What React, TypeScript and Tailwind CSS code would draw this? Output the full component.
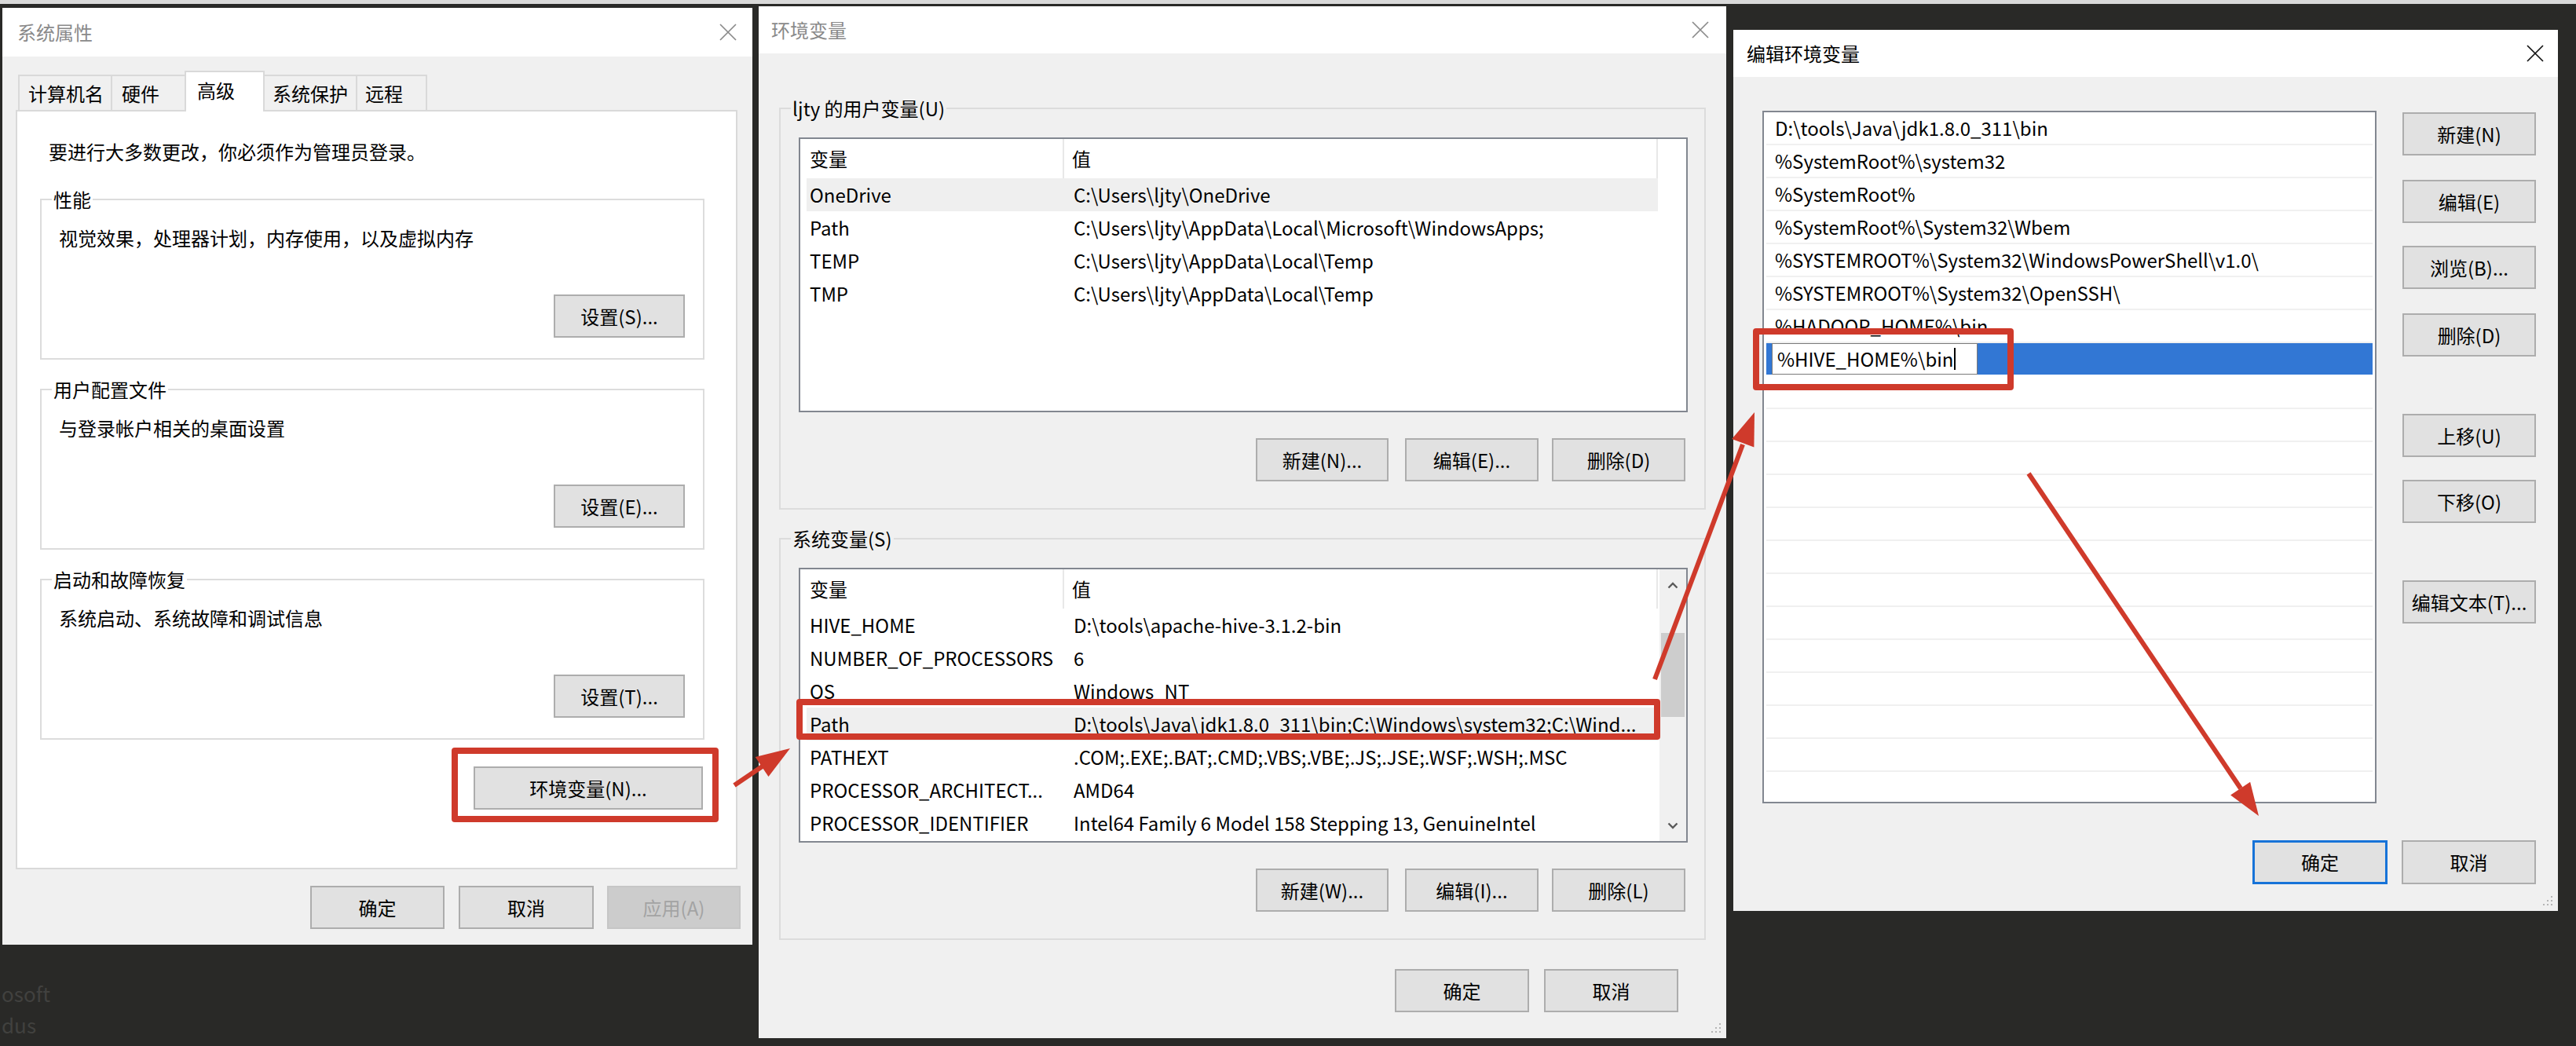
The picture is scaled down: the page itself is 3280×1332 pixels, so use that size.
import React from "react";

type BtnProps = {
  children: React.ReactNode;
  className?: string;
  disabled?: boolean;
  primary?: boolean;
};

function Btn({ children, className = "", disabled = false, primary = false }: BtnProps) {
  const tone = disabled
    ? "border-2 border-[#c6c6c6] bg-[#cccccc] text-[#a3a3a3]"
    : primary
    ? "border-[3px] border-[#1773d8] bg-[#e1e1e1] text-black"
    : "border-2 border-[#adadad] bg-[#e1e1e1] text-black";
  return (
    <div className={`flex h-[55px] shrink-0 items-center justify-center whitespace-nowrap text-[24px] leading-[34px] ${tone} ${className}`}>
      {children}
    </div>
  );
}

function CloseX({ color }: { color: string }) {
  return (
    <svg width="24" height="22" viewBox="0 0 24 22">
      <path d="M2 1 L22 21 M22 1 L2 21" stroke={color} strokeWidth="1.7" fill="none" />
    </svg>
  );
}

function TitleBar({ title, h, pl, pr, active }: { title: string; h: string; pl: string; pr: string; active?: boolean }) {
  return (
    <div className={`flex shrink-0 items-center justify-between bg-white ${h} ${pl} ${pr}`}>
      <span className={`text-[24px] leading-[34px] ${active ? "text-black" : "text-[#8a8a8a]"}`}>{title}</span>
      <CloseX color={active ? "#111111" : "#8a8a8a"} />
    </div>
  );
}

function Grip() {
  return (
    <svg className="absolute bottom-[5px] right-[5px]" width="16" height="16" viewBox="0 0 16 16">
      <g fill="#b5b5b5">
        <rect x="12" y="2" width="2" height="2" />
        <rect x="12" y="7" width="2" height="2" />
        <rect x="12" y="12" width="2" height="2" />
        <rect x="7" y="7" width="2" height="2" />
        <rect x="7" y="12" width="2" height="2" />
        <rect x="2" y="12" width="2" height="2" />
      </g>
    </svg>
  );
}

function GroupBox({ label, text, btn }: { label: string; text: string; btn: string }) {
  return (
    <div className="relative ml-[29px] flex h-[205px] w-[846px] shrink-0 flex-col border-2 border-[#dcdcdc]">
      <span className="absolute -top-[18px] left-[13px] bg-white px-[2px] text-[24px] leading-[34px]">{label}</span>
      <div className="ml-[22px] mt-[31px] text-[24px] leading-[34px]">{text}</div>
      <Btn className="mr-[23px] mt-[55px] w-[167px] self-end">{btn}</Btn>
    </div>
  );
}

function SystemProps() {
  const tabs = [
    { t: "计算机名", w: "w-[118px]", pl: "pl-[11px]" },
    { t: "硬件", w: "w-[94px]", pl: "pl-[12px]" },
    { t: "高级", w: "w-[102px]", pl: "pl-[14px]", sel: true },
    { t: "系统保护", w: "w-[116px]", pl: "pl-[10px]" },
    { t: "远程", w: "w-[91px]", pl: "pl-[10px]" },
  ];
  return (
    <div className="ml-[3px] mt-[5px] flex h-[1193px] w-[955px] shrink-0 flex-col bg-[#f0f0f0]">
      <TitleBar title="系统属性" h="h-[62px]" pl="pl-[19px]" pr="pr-[19px]" />
      <div className="ml-[17px] mt-[19px] flex h-[49px] items-end pl-[3px]">
        {tabs.map((tab, i) =>
          tab.sel ? (
            <div
              key={tab.t}
              className={`relative z-10 -mb-[2px] flex h-[52px] items-start border-2 border-b-0 border-[#d9d9d9] bg-white pt-[6px] text-[24px] leading-[34px] ${tab.w} ${tab.pl}`}
            >
              {tab.t}
            </div>
          ) : (
            <div
              key={tab.t}
              className={`flex h-[45px] items-center border-t-2 border-[#d9d9d9] bg-[#f0f0f0] text-[24px] leading-[34px] ${i === 4 ? "border-r-2" : ""} ${i === 3 ? "" : "border-l-2"} ${tab.w} ${tab.pl}`}
            >
              {tab.t}
            </div>
          )
        )}
      </div>
      <div className="ml-[17px] flex h-[967px] w-[919px] shrink-0 flex-col border-2 border-[#d9d9d9] bg-white">
        <div className="ml-[40px] mt-[34px] text-[24px] leading-[34px]">要进行大多数更改，你必须作为管理员登录。</div>
        <div className="mt-[43px]">
          <GroupBox label="性能" text="视觉效果，处理器计划，内存使用，以及虚拟内存" btn="设置(S)..." />
        </div>
        <div className="mt-[37px]">
          <GroupBox label="用户配置文件" text="与登录帐户相关的桌面设置" btn="设置(E)..." />
        </div>
        <div className="mt-[37px]">
          <GroupBox label="启动和故障恢复" text="系统启动、系统故障和调试信息" btn="设置(T)..." />
        </div>
        <div className="relative mr-[42px] mt-[34px] self-end">
          <Btn className="w-[292px]">环境变量(N)...</Btn>
          <div className="pointer-events-none absolute -bottom-[16px] -left-[28px] -right-[20px] -top-[24px] rounded-[4px] border-[8px] border-[#cf3a2b]" />
        </div>
      </div>
      <div className="mt-[21px] flex justify-end pr-[15px]">
        <Btn className="w-[171px]">确定</Btn>
        <Btn className="ml-[18px] w-[172px]">取消</Btn>
        <Btn className="ml-[17px] w-[170px]" disabled>
          应用(A)
        </Btn>
      </div>
    </div>
  );
}

type Row = { k: string; v: string; hl?: boolean; boxed?: boolean };

function VarRow({ r }: { r: Row }) {
  return (
    <div className={`relative flex h-[42px] w-[1084px] shrink-0 items-center text-[24px] ${r.hl ? "bg-[#efefef]" : ""}`}>
      <div className="w-[336px] shrink-0 whitespace-nowrap pl-[4px] leading-[34px]">{r.k}</div>
      <div className="flex-1 whitespace-nowrap pl-[4px] leading-[34px]">{r.v}</div>
      {r.boxed && (
        <div className="pointer-events-none absolute -left-[13px] -right-[3px] -top-[11px] bottom-[1px] rounded-[4px] border-[8px] border-[#cf3a2b]" />
      )}
    </div>
  );
}

function VarHeader() {
  return (
    <div className="ml-[8px] flex h-[50px] w-[1084px] shrink-0 items-center text-[24px] leading-[34px]">
      <div className="flex h-full w-[328px] shrink-0 items-center border-r-2 border-[#e8e8e8] pl-[4px]">变量</div>
      <div className="flex h-full flex-1 items-center border-r-2 border-[#e8e8e8] pl-[10px]">值</div>
    </div>
  );
}

function Chevron({ up }: { up?: boolean }) {
  return (
    <svg width="14" height="9" viewBox="0 0 14 9">
      <path d={up ? "M1.5 7.5 L7 2 L12.5 7.5" : "M1.5 1.5 L7 7 L12.5 1.5"} stroke="#5a5a5a" strokeWidth="2.4" fill="none" />
    </svg>
  );
}

function VarGroup({ label, rows, btns, scroll, mt }: { label: string; rows: Row[]; btns: string[]; scroll?: boolean; mt: string }) {
  return (
    <div className={`relative ml-[26px] flex h-[512px] w-[1180px] shrink-0 flex-col border-2 border-[#dcdcdc] ${mt}`}>
      <span className="absolute -top-[18px] left-[13px] bg-[#f0f0f0] px-[2px] text-[24px] leading-[34px]">{label}</span>
      <div className="ml-[23px] mt-[36px] flex h-[350px] w-[1132px] shrink-0 border-2 border-[#828790] bg-white">
        <div className="flex flex-1 flex-col">
          <VarHeader />
          <div className="ml-[8px] flex flex-col">
            {rows.map((r) => (
              <VarRow key={r.k} r={r} />
            ))}
          </div>
        </div>
        {scroll && (
          <div className="flex w-[34px] shrink-0 flex-col bg-[#f0f0f0]">
            <div className="flex h-[40px] items-center justify-center">
              <Chevron up />
            </div>
            <div className="mx-[2px] mt-[41px] h-[107px] bg-[#cdcdcd]" />
            <div className="flex-1" />
            <div className="flex h-[40px] items-center justify-center">
              <Chevron />
            </div>
          </div>
        )}
      </div>
      <div className="mr-[24px] mt-[33px] flex justify-end">
        <Btn className="w-[169px]">{btns[0]}</Btn>
        <Btn className="ml-[21px] w-[170px]">{btns[1]}</Btn>
        <Btn className="ml-[17px] w-[170px]">{btns[2]}</Btn>
      </div>
    </div>
  );
}

function EnvVars() {
  const userRows: Row[] = [
    { k: "OneDrive", v: "C:\\Users\\ljty\\OneDrive", hl: true },
    { k: "Path", v: "C:\\Users\\ljty\\AppData\\Local\\Microsoft\\WindowsApps;" },
    { k: "TEMP", v: "C:\\Users\\ljty\\AppData\\Local\\Temp" },
    { k: "TMP", v: "C:\\Users\\ljty\\AppData\\Local\\Temp" },
  ];
  const sysRows: Row[] = [
    { k: "HIVE_HOME", v: "D:\\tools\\apache-hive-3.1.2-bin" },
    { k: "NUMBER_OF_PROCESSORS", v: "6" },
    { k: "OS", v: "Windows_NT" },
    { k: "Path", v: "D:\\tools\\Java\\jdk1.8.0_311\\bin;C:\\Windows\\system32;C:\\Wind...", hl: true, boxed: true },
    { k: "PATHEXT", v: ".COM;.EXE;.BAT;.CMD;.VBS;.VBE;.JS;.JSE;.WSF;.WSH;.MSC" },
    { k: "PROCESSOR_ARCHITECT...", v: "AMD64" },
    { k: "PROCESSOR_IDENTIFIER", v: "Intel64 Family 6 Model 158 Stepping 13, GenuineIntel" },
  ];
  return (
    <div className="relative ml-[8px] mt-[3px] flex h-[1314px] w-[1232px] shrink-0 flex-col bg-[#f0f0f0]">
      <TitleBar title="环境变量" h="h-[60px]" pl="pl-[16px]" pr="pr-[21px]" />
      <VarGroup mt="mt-[69px]" label="ljty 的用户变量(U)" rows={userRows} btns={["新建(N)...", "编辑(E)...", "删除(D)"]} />
      <VarGroup mt="mt-[36px]" label="系统变量(S)" rows={sysRows} btns={["新建(W)...", "编辑(I)...", "删除(L)"]} scroll />
      <div className="mt-[37px] flex justify-end pr-[61px]">
        <Btn className="w-[171px]">确定</Btn>
        <Btn className="ml-[19px] w-[171px]">取消</Btn>
      </div>
      <Grip />
    </div>
  );
}

function EditEnv() {
  const items = [
    "D:\\tools\\Java\\jdk1.8.0_311\\bin",
    "%SystemRoot%\\system32",
    "%SystemRoot%",
    "%SystemRoot%\\System32\\Wbem",
    "%SYSTEMROOT%\\System32\\WindowsPowerShell\\v1.0\\",
    "%SYSTEMROOT%\\System32\\OpenSSH\\",
    "%HADOOP_HOME%\\bin",
  ];
  const empties = Array.from({ length: 13 }, (_, i) => i);
  return (
    <div className="relative ml-[9px] mt-[33px] flex h-[1122px] w-[1050px] shrink-0 flex-col bg-[#f0f0f0]">
      <TitleBar title="编辑环境变量" h="h-[60px]" pl="pl-[17px]" pr="pr-[17px]" active />
      <div className="mt-[43px] flex items-start">
        <div className="ml-[37px] flex h-[882px] w-[782px] shrink-0 flex-col border-2 border-[#828790] bg-white px-[3px]">
          {items.map((t) => (
            <div key={t} className="flex h-[42px] shrink-0 items-center whitespace-nowrap border-b-2 border-[#f0f0f0] pl-[11px] text-[24px] leading-[34px]">
              {t}
            </div>
          ))}
          <div className="flex h-[42px] shrink-0 items-center border-b-2 border-white bg-[#3277d4]">
            <div className="relative ml-[7px] flex h-[40px] w-[262px] items-center border border-[#7a7a7a] bg-white pl-[6px] text-[24px] leading-[34px]">
              <span>%HIVE_HOME%\bin</span>
              <span className="ml-[1px] h-[28px] w-[2px] bg-black" />
              <div className="pointer-events-none absolute -bottom-[21px] -left-[25px] -right-[47px] -top-[20px] rounded-[4px] border-[8px] border-[#cf3a2b]" />
            </div>
          </div>
          {empties.map((i) => (
            <div key={i} className="h-[42px] shrink-0 border-b-2 border-[#f0f0f0]" />
          ))}
        </div>
        <div className="ml-[33px] mt-[2px] flex w-[170px] shrink-0 flex-col">
          <Btn className="w-[170px]">新建(N)</Btn>
          <Btn className="mt-[31px] w-[170px]">编辑(E)</Btn>
          <Btn className="mt-[29px] w-[170px]">浏览(B)...</Btn>
          <Btn className="mt-[31px] w-[170px]">删除(D)</Btn>
          <Btn className="mt-[73px] w-[170px]">上移(U)</Btn>
          <Btn className="mt-[29px] w-[170px]">下移(O)</Btn>
          <Btn className="mt-[73px] w-[170px]">编辑文本(T)...</Btn>
        </div>
      </div>
      <div className="mt-[47px] flex justify-end pr-[28px]">
        <Btn className="h-[56px] w-[172px]" primary>
          确定
        </Btn>
        <Btn className="ml-[18px] h-[56px] w-[171px]">取消</Btn>
      </div>
      <Grip />
    </div>
  );
}

function Arrows() {
  const c = "#cf3a2b";
  return (
    <svg className="pointer-events-none absolute left-0 top-0" width="3280" height="1332" viewBox="0 0 3280 1332">
      <line x1="935" y1="1000" x2="972" y2="975" stroke={c} strokeWidth="6" />
      <polygon points="1006,953 978.5,988.9 961.7,964" fill={c} />
      <line x1="2107" y1="865" x2="2219" y2="566" stroke={c} strokeWidth="6" />
      <polygon points="2234,525 2233.4,569.6 2205.2,559.1" fill={c} />
      <line x1="2583" y1="603" x2="2853" y2="1004" stroke={c} strokeWidth="6" />
      <polygon points="2876,1039 2840.1,1012.5 2865.1,995.7" fill={c} />
    </svg>
  );
}

export default function App() {
  return (
    <div className="relative h-[1332px] w-[3280px] overflow-hidden bg-[#292927] font-['Noto_Sans_CJK_SC','Noto_Sans',sans-serif] text-black">
      <div className="absolute left-[2px] top-[1250px] text-[26px] leading-[30px] text-[#41413f]">osoft</div>
      <div className="absolute left-[2px] top-[1290px] text-[26px] leading-[30px] text-[#41413f]">dus</div>
      <div className="relative flex flex-col">
        <div className="h-[5px] w-full bg-[#d9d9d9]" />
        <div className="flex items-start">
          <SystemProps />
          <EnvVars />
          <EditEnv />
        </div>
      </div>
      <Arrows />
    </div>
  );
}
